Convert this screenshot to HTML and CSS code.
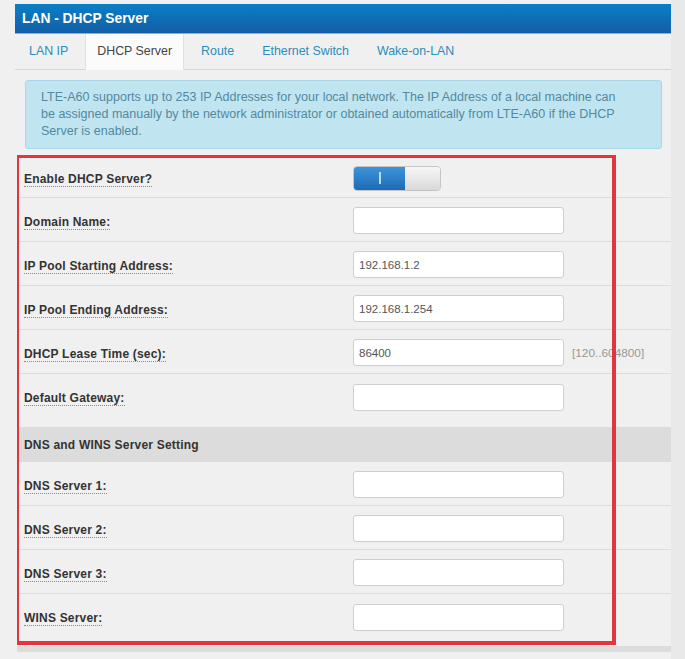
FILE: index.html
```html
<!DOCTYPE html>
<html lang="en">
<head>
    <meta charset="UTF-8">
    <title>LAN - DHCP Server</title>
    <link rel="stylesheet" href="styles.css">
</head>
<body>
    <div class="page">
        <div class="panel">
            <div class="panel-header">LAN - DHCP Server</div>

            <ul class="tabs">
                <li><a href="#">LAN IP</a></li>
                <li class="active"><a href="#">DHCP Server</a></li>
                <li><a href="#">Route</a></li>
                <li><a href="#">Ethernet Switch</a></li>
                <li><a href="#">Wake-on-LAN</a></li>
            </ul>

            <div class="info-box">
                LTE-A60 supports up to 253 IP Addresses for your local network. The IP Address of a local machine can<br>
                be assigned manually by the network administrator or obtained automatically from LTE-A60 if the DHCP<br>
                Server is enabled.
            </div>

            <div class="form">
                <div class="form-row first">
                    <div><span class="label">Enable DHCP Server?</span></div>
                    <div class="toggle">
                        <span class="toggle-on"><i></i></span>
                        <span class="toggle-off"></span>
                    </div>
                </div>
                <div class="form-row">
                    <div><span class="label">Domain Name:</span></div>
                    <input type="text" class="field" value="">
                </div>
                <div class="form-row">
                    <div><span class="label">IP Pool Starting Address:</span></div>
                    <input type="text" class="field" value="192.168.1.2">
                </div>
                <div class="form-row">
                    <div><span class="label">IP Pool Ending Address:</span></div>
                    <input type="text" class="field" value="192.168.1.254">
                </div>
                <div class="form-row">
                    <div><span class="label">DHCP Lease Time (sec):</span></div>
                    <input type="text" class="field" value="86400">
                    <span class="hint">[120..604800]</span>
                </div>
                <div class="form-row last">
                    <div><span class="label">Default Gateway:</span></div>
                    <input type="text" class="field" value="">
                </div>

                <div class="section-title">DNS and WINS Server Setting</div>

                <div class="form-row">
                    <div><span class="label">DNS Server 1:</span></div>
                    <input type="text" class="field" value="">
                </div>
                <div class="form-row">
                    <div><span class="label">DNS Server 2:</span></div>
                    <input type="text" class="field" value="">
                </div>
                <div class="form-row">
                    <div><span class="label">DNS Server 3:</span></div>
                    <input type="text" class="field" value="">
                </div>
                <div class="form-row end">
                    <div><span class="label">WINS Server:</span></div>
                    <input type="text" class="field" value="">
                </div>
            </div>
            <div class="panel-footer"></div>

            <!-- annotation frame drawn over the form -->
            <div class="highlight"></div>
        </div>
    </div>
</body>
</html>
```

FILE: styles.css
```css
:root {
    --page-bg: #e9e9e9;
    --panel-bg: #f0f0f0;
    --line-color: #dcdcdc;
    --tab-color: #2a8dbb;
    --label-color: #333;
}

body {
    margin: 0;
    background: var(--page-bg);
    font-family: 'Liberation Sans', Arial, sans-serif;
    color: var(--label-color);
}

.page {
    padding: 4px 0 0 15px;
    width: 656px;
    height: 655px;
    background: var(--panel-bg);
}

.panel {
    position: relative;
    width: 656px;
}

.panel-header {
    height: 30px;
    box-sizing: border-box;
    padding: 0 0 0 7px;
    display: flex;
    align-items: center;
    background: linear-gradient(#0a7fc6, #125ea6);
    border-bottom: 1px solid #7fb3dc;
    color: #fff;
    font-weight: bold;
    font-size: 13.8px;
}

.tabs {
    list-style: none;
    margin: 0;
    padding: 0;
    display: flex;
    height: 35px;
    border-bottom: 1px solid #d6d6d6;
}

.tabs li a {
    display: block;
    height: 35px;
    line-height: 34px;
    padding: 0 14px;
    color: var(--tab-color);
    text-decoration: none;
    font-size: 12.4px;
}

.tabs li.active a {
    background: #fbfbfb;
    color: #444;
    height: 36px;
    box-sizing: border-box;
    padding: 0 11px;
    margin: 0 3px;
    border-left: 1px solid #e2e2e2;
    border-right: 1px solid #e2e2e2;
}

.info-box {
    margin: 10px 9px 0 10px;
    padding: 8px 15px;
    height: 51px;
    background: #c0e5f1;
    border: 1px solid #a9d8e8;
    border-radius: 3px;
    color: #5289a0;
    font-size: 12.5px;
    line-height: 17px;
    white-space: nowrap;
}

.form {
    margin: 7px 0 0 2px;
}

.form-row {
    display: grid;
    grid-template-columns: 329px 211px auto;
    align-items: center;
    height: 44px;
    box-sizing: border-box;
    padding: 9px 0 7px 7px;
    border-bottom: 1px solid var(--line-color);
}

.form-row.first {
    height: 42px;
    padding: 9px 0 6px 7px;
}

.form-row.last {
    height: 53px;
    padding-bottom: 16px;
    border-bottom: none;
}

.form-row.end {
    height: 52px;
    padding-bottom: 15px;
    border-bottom: none;
}

.label,
.section-title {
    font-size: 12px;
    font-weight: bold;
    color: var(--label-color);
    letter-spacing: 0.2px;
}

.label {
    border-bottom: 1px dotted #8a8a8a;
    line-height: 13px;
}

.field {
    width: 211px;
    height: 27px;
    box-sizing: border-box;
    padding: 0 5px;
    border: 1px solid #cfcfcf;
    border-radius: 3px;
    background: #fff;
    font-family: 'Liberation Sans', Arial, sans-serif;
    font-size: 11.5px;
    color: #555;
    outline: none;
}

.hint {
    margin-left: 8px;
    font-size: 11.8px;
    color: #999;
}

.toggle {
    display: flex;
    width: 88px;
    height: 25px;
    border: 1px solid #c6c6c6;
    border-radius: 4px;
    overflow: hidden;
    box-sizing: border-box;
}

.toggle-on {
    width: 51px;
    display: flex;
    align-items: center;
    justify-content: center;
    background: linear-gradient(#3f94da, #1c6bb4);
}

.toggle-on i {
    display: block;
    width: 2px;
    height: 12px;
    background: #b9dcf6;
}

.toggle-off {
    flex: 1;
    background: linear-gradient(#f6f6f6, #d9d9d9);
}

.section-title {
    height: 35px;
    display: flex;
    align-items: center;
    padding-left: 7px;
    background: #dcdcdc;
}

.panel-footer {
    margin: 0 0 0 2px;
    height: 6px;
    background: #dcdcdc;
}

.highlight {
    position: absolute;
    left: 2px;
    top: 151px;
    width: 593px;
    height: 483px;
    border-style: solid;
    border-color: #e2363f;
    border-width: 3px 4px 4px 2px;
    pointer-events: none;
}
```
